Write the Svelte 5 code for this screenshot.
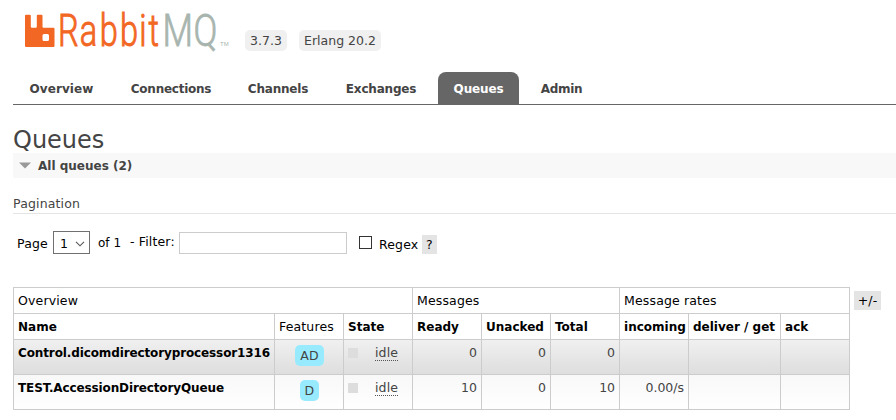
<script>
  const tabs = [
    { name: 'Overview', width: 97, spacing: 0.1 },
    { name: 'Connections', width: 122, spacing: -0.25 },
    { name: 'Channels', width: 92, spacing: -0.2 },
    { name: 'Exchanges', width: 114, spacing: -0.2 },
    { name: 'Queues', width: 81, selected: true, spacing: -0.15 },
    { name: 'Admin', width: 85, spacing: -0.3 }
  ];
  const columns = [261, 69, 69, 69, 69, 69, 69, 92, 69];
  const rows = [
    { name: 'Control.dicomdirectoryprocessor1316', feature: 'AD', ready: 0, unacked: 0, total: 0, incoming: '' },
    { name: 'TEST.AccessionDirectoryQueue', feature: 'D', ready: 10, unacked: 0, total: 10, incoming: '0.00/s' }
  ];
</script>

<div class="page">
  <header>
    <svg class="logo" width="206" height="44" viewBox="0 0 206 44" role="img" aria-label="RabbitMQ">
      <path fill="#f26724" d="M1 2.700h3.800q1 0 1 1v11q0 1 1 1h4q1 0 1-1V3.700q0-1 1-1H16.500q1 0 1 1v11q0 1 1 1H28.500q1 0 1 1v17.300q0 1-1 1H1q-1 0-1-1V3.700q0-1 1-1zM19 22q-1.500 0-1.500 1.500v4q0 1.500 1.500 1.500h3.500q1.500 0 1.500-1.500v-4q0-1.500-1.500-1.500z" fill-rule="evenodd" />
      <text class="word orange" transform="scale(.74 1)" y="33.700" x="44.500 74 101 128.500 154.500 167">Rabbit</text>
      <text class="word grey" transform="scale(.8 1)" y="33.700" x="172 210.500">MQ</text>
      <text class="tm" x="195" y="34">TM</text>
    </svg>
    <span class="version v1">3.7.3</span>
    <span class="version v2">Erlang 20.2</span>
  </header>
  <nav>
    {#each tabs as tab}
      <a class:selected={tab.selected} style="width:{tab.width}px;letter-spacing:{tab.spacing}px">{tab.name}</a>
    {/each}
  </nav>
  <h1>Queues</h1>
  <h2><svg width="12" height="7"><path d="M0 .5h12l-6 6z" fill="#999" /></svg>All queues (2)</h2>
  <h3>Pagination</h3>
  <div class="filter">
    <span class="lpage">Page</span>
    <span class="select">1<svg width="10" height="6"><path d="M1 .8l4 4 4-4" fill="none" stroke="#555" stroke-width="1.1" /></svg></span>
    <span class="of">of 1</span>
    <span class="lfilter">- Filter:</span>
    <input type="text" aria-label="Filter" />
    <span class="box"></span>
    <span class="lregex">Regex</span>
    <span class="help">?</span>
  </div>
  <div class="list">
    <table>
      <colgroup>{#each columns as w}<col style="width:{w}px" />{/each}</colgroup>
      <thead>
        <tr><th class="group" colspan="3">Overview</th><th class="group" colspan="3">Messages</th><th class="group" colspan="3">Message rates</th></tr>
        <tr><th>Name</th><th class="group">Features</th><th>State</th><th>Ready</th><th>Unacked</th><th>Total</th><th>incoming</th><th>deliver / get</th><th>ack</th></tr>
      </thead>
      <tbody>
        {#each rows as row, i}
          <tr class:alt={i === 0}>
            <td class="name">{row.name}</td>
            <td class="feature"><span>{row.feature}</span></td>
            <td><div class="state"><i></i><abbr>idle</abbr></div></td>
            <td class="num">{row.ready}</td>
            <td class="num">{row.unacked}</td>
            <td class="num">{row.total}</td>
            <td class="num">{row.incoming}</td>
            <td></td>
            <td></td>
          </tr>
        {/each}
      </tbody>
    </table>
    <span class="toggle">+/-</span>
  </div>
</div>

<style>
  :global(body) { background: #fff; }
  .page { width: 896px; height: 420px; overflow: hidden; padding-left: 13px; box-sizing: border-box; font: 12.5px/16px Verdana, "DejaVu Sans", sans-serif; letter-spacing: .15px; color: #444; }
  header { height: 72px; display: flex; align-items: flex-start; padding-left: 12px; box-sizing: border-box; }
  .logo { margin-top: 12px; flex: none; overflow: visible; }
  .word { font: 300 44px Roboto, sans-serif; letter-spacing: 0; }
  .orange { fill: #f26724; stroke: #f26724; stroke-width: 1; }
  .grey { fill: #a8b5af; stroke: #a8b5af; stroke-width: .8; }
  .tm { font: 6px "Liberation Sans", sans-serif; fill: #a8b5af; letter-spacing: 0; }
  .version { box-sizing: border-box; height: 21px; margin-top: 30px; border-radius: 5px; background: #f0f0f0; line-height: 22px; text-align: center; white-space: nowrap; letter-spacing: 0; }
  .v1 { width: 42px; margin-left: 14px; }
  .v2 { width: 82px; margin-left: 12px; }
  nav { display: flex; height: 32px; border-bottom: 1px solid #666; font-size: 12px; }
  nav a { box-sizing: border-box; flex: none; height: 32px; text-align: center; font-weight: bold; line-height: 35px; }
  nav a.selected { background: #666; color: #fff; border-radius: 8px 8px 0 0; }
  h1 { margin: 22px 0 0; height: 26px; font-size: 24px; line-height: 26px; font-weight: normal; letter-spacing: 0; }
  h2 { display: flex; align-items: center; gap: 7px; margin: 0; padding-left: 6px; height: 25px; background: #f8f8f8; font-size: 12px; letter-spacing: 0; }
  h3 { margin: 12px 0 0; height: 23px; border-bottom: 1px solid #e4e4e4; font-size: 12.5px; line-height: 27px; font-weight: normal; letter-spacing: .15px; }
  .filter { display: flex; height: 73px; color: #000; align-items: flex-start; white-space: nowrap; }
  .filter span { flex: none; box-sizing: border-box; }
  .lpage { width: 40px; padding: 22px 0 0 4px; }
  .filter .select { width: 37px; height: 23px; margin-top: 17px; border: 1px solid #707070; display: flex; align-items: center; justify-content: space-between; padding: 2px 4px 0 6px; }
  .filter .of { width: 40px; padding: 21px 0 0 8px; font-size: 12px; letter-spacing: 0; }
  .lfilter { width: 49px; padding-top: 20px; }
  input { width: 168px; height: 22px; margin: 18px 0 0; padding: 0; border: 1px solid #ccc; box-sizing: border-box; background: #fff; }
  .box { width: 13px; height: 13px; margin: 22px 7px 0 12px; border: 1px solid #333; }
  .lregex { width: 43px; padding-top: 23px; }
  .filter .help { width: 15px; height: 19px; margin-top: 21px; background: #e4e4e4; text-align: center; line-height: 19px; }
  .list { display: flex; align-items: flex-start; gap: 4px; }
  table { flex: none; width: 837px; table-layout: fixed; border-collapse: collapse; }
  th, td { border: 1px solid #ccc; padding: 0 4px; box-sizing: border-box; white-space: nowrap; line-height: 16px; }
  th { height: 26px; text-align: left; color: #000; font-size: 12px; letter-spacing: 0; }
  th.group { font-weight: normal; font-size: 12.5px; letter-spacing: .15px; }
  td { height: 35px; vertical-align: top; padding-top: 5px; }
  tbody tr { background: linear-gradient(#f8f8f8, #fff); }
  tbody tr.alt { background: linear-gradient(#f0f0f0, #ddd); }
  .name { font-weight: bold; color: #000; font-size: 12px; letter-spacing: -.12px; }
  .feature { text-align: center; }
  .feature span { display: inline-block; height: 21px; margin-left: 1px; padding: 0 5px; border-radius: 5px; background: #98ebff; line-height: 21px; }
  .num { text-align: right; letter-spacing: 0; }
  .state { display: flex; align-items: flex-start; }
  .state i { width: 10px; height: 10px; margin: 3px 17px 0 0; background: #ddd; }
  abbr { height: 15px; border-bottom: 1px dotted #555; }
  .toggle { width: 27px; height: 19px; margin-top: 4px; background: #e4e4e4; color: #000; text-align: center; line-height: 19px; }
</style>
